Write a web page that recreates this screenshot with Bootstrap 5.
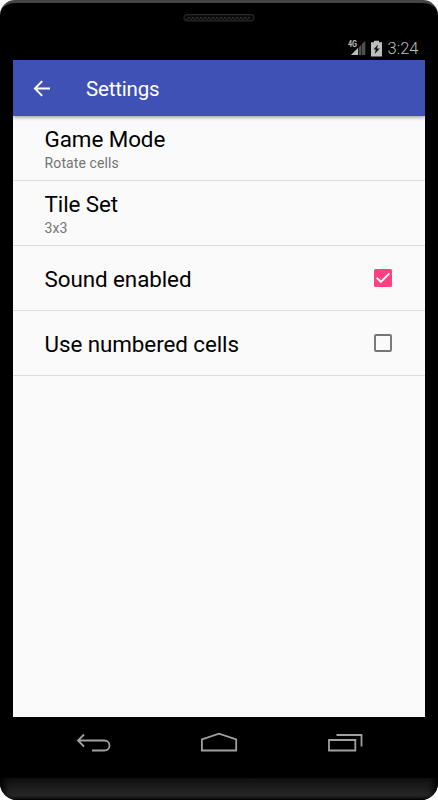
<!DOCTYPE html>
<html lang="en">
<head>
<meta charset="utf-8">
<meta name="viewport" content="width=device-width, initial-scale=1">
<title>Settings</title>
<link href="https://cdn.jsdelivr.net/npm/bootstrap@5.3.0/dist/css/bootstrap.min.css" rel="stylesheet">
<style>
body{font-family:Roboto,"Liberation Sans",sans-serif;background:#fff;color:#000}
.phone{width:438px;height:800px;background:#000;border-radius:15px 15px 17px 17px;overflow:hidden;border-top:3px solid #444}
.earpiece-area{height:32px;padding-top:11px}
.status{height:25px;padding:2px 19.5px 0 0;color:#bebebe;font-size:16.5px;line-height:23px}
.clock{font-weight:300;padding-left:5px}
.battery{margin:-1px 0 0 3px}
.screen{width:411.6px;height:657px;margin-left:13.4px;background:#fafafa}
.app-bar{height:56px;background:#3f51b5;color:#fff;padding-left:18.6px;box-shadow:0 1px 4px rgba(0,0,0,.45);position:relative;flex-shrink:0}
.app-title{font-size:20.5px;line-height:24px;margin-left:36px;letter-spacing:-.18px;padding-top:2px}
.pref{height:65px;border-bottom:1px solid #dcdcdc;padding:0 32.4px 0 31.2px}
.pref-title{font-size:22.4px;line-height:27px;letter-spacing:-.08px;padding-top:2px}
.pref-sub{font-size:14px;line-height:18px;color:#737373;letter-spacing:.1px;margin-top:1px}
.nav-keys{height:61px;padding:14px 74px 0 76px}
.chin{height:22px;background:linear-gradient(#111,#262626 80%,#161616 92%,#000);box-shadow:inset 8px 0 7px -4px #000,inset -8px 0 7px -4px #000}
svg{display:block;flex-shrink:0}
</style>
</head>
<body>
<main class="phone d-flex flex-column">
  <div class="earpiece-area d-flex justify-content-center flex-shrink-0">
    <svg width="72" height="8" viewBox="0 0 72 8"><rect x="1" y=".7" width="70" height="6.2" rx="3" fill="#080808" stroke="#282828" stroke-width="1.2"/><path d="M5 3.7h63" stroke="#303030" stroke-width="1.5" stroke-dasharray="2 2"/><path d="M3 5.2h64" stroke="#2b2b2b" stroke-width="1.3" stroke-dasharray="2 2"/></svg>
  </div>
  <div class="status d-flex align-items-center justify-content-end flex-shrink-0">
    <svg width="20" height="17" viewBox="0 0 20 17"><path d="M4 15 18.300 .7V15z" fill="#505050"/><path d="M4 15l7-7v7z" fill="#bebebe"/><path d="M11.500 3v12M14.500 3v12" stroke="#000" stroke-width=".6"/><text x="1" y="7.300" font-size="8.800" font-weight="700" textLength="9" lengthAdjust="spacingAndGlyphs" fill="#bebebe" stroke="#000" stroke-width=".8" paint-order="stroke">4G</text></svg>
    <svg class="battery" width="13" height="17" viewBox="0 0 13 17"><path d="M1 2.200H4V.7h5v1.500h3v14.300H1z" fill="#bebebe"/><path d="M8 4.500 3.500 9.500h2.300L4.700 14 9.800 8.400H7z" fill="#111"/></svg>
    <span class="clock">3:24</span>
  </div>
  <section class="screen d-flex flex-column flex-shrink-0">
    <header class="app-bar d-flex align-items-center">
      <svg width="18" height="18" viewBox="0 0 18 18" fill="none" stroke="#fff" stroke-width="1.9"><path d="M18 9.500H3M10.200 2.200 2.900 9.500l7.300 7.300"/></svg>
      <h1 class="app-title fw-normal mb-0">Settings</h1>
    </header>
    <div class="pref d-flex flex-column justify-content-center">
      <div class="pref-title">Game Mode</div><div class="pref-sub">Rotate cells</div>
    </div>
    <div class="pref d-flex flex-column justify-content-center">
      <div class="pref-title">Tile Set</div><div class="pref-sub">3x3</div>
    </div>
    <div class="pref d-flex align-items-center justify-content-between">
      <div class="pref-title">Sound enabled</div>
      <svg width="20" height="20" viewBox="0 0 20 20"><rect x="1" y="1" width="18" height="18" rx="1.500" fill="#ff4081"/><path d="m3.700 9.700 4.200 4.200 8.500-8.500" fill="none" stroke="#fff" stroke-width="2"/></svg>
    </div>
    <div class="pref d-flex align-items-center justify-content-between">
      <div class="pref-title">Use numbered cells</div>
      <svg width="20" height="20" viewBox="0 0 20 20"><rect x="2" y="2" width="16" height="16" rx="1" fill="none" stroke="#757575" stroke-width="1.900"/></svg>
    </div>
  </section>
  <nav class="nav-keys d-flex justify-content-between flex-shrink-0">
    <svg width="36" height="24" viewBox="0 0 36 24" fill="none" stroke="#a0a0a0" stroke-width="1.8"><path d="M2 9.500h26.500a5 5 0 0 1 0 10H16M8 3.500 2 9.500l6 6"/></svg>
    <svg width="38" height="24" viewBox="0 0 38 24" fill="none" stroke="#a0a0a0" stroke-width="1.8"><path d="M.9 19.500v-11L18 2.700 35.200 8.500v11z"/></svg>
    <svg width="37" height="24" viewBox="0 0 37 24" fill="none" stroke="#a0a0a0" stroke-width="1.8"><path d="M2 9h26.300v10.500H2zM9.500 4h25v11.500"/></svg>
  </nav>
  <div class="chin flex-shrink-0"></div>
</main>
<script src="https://cdn.jsdelivr.net/npm/bootstrap@5.3.0/dist/js/bootstrap.bundle.min.js"></script>
</body>
</html>
